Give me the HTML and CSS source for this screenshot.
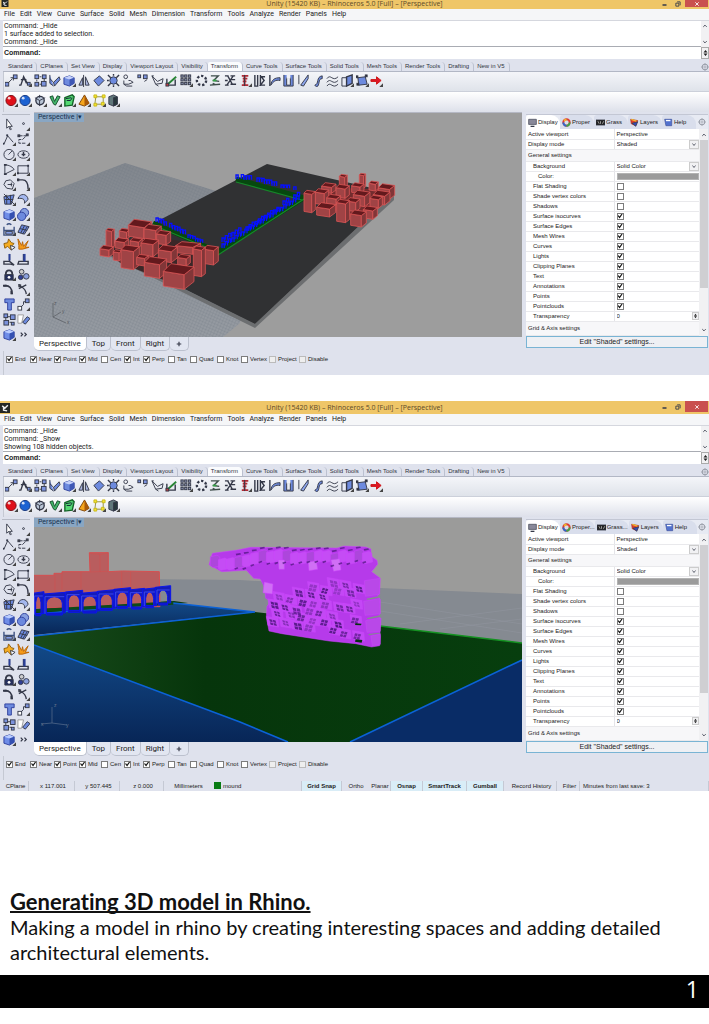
FILE: index.html
```html
<!DOCTYPE html>
<html lang="en">
<head>
<meta charset="utf-8">
<meta name="viewport" content="width=device-width, initial-scale=1">
<title>Generating 3D model in Rhino</title>
<link rel="stylesheet" href="styles.css">
</head>
<body>
<main class="sheet">
  <section class="app app-cut" id="plan" aria-label="Site plan model"></section>
  <section class="app" id="street" aria-label="Street level model"></section>
  <article class="caption">
    <h1>Generating 3D model in Rhino.</h1>
    <p>Making a model in rhino by creating interesting spaces and adding detailed architectural elements.</p>
  </article>
  <footer class="page-foot">1</footer>
</main>
<script src="app.js"></script>
</body>
</html>
```

FILE: styles.css
```css
* { box-sizing: border-box; }
body { margin: 0; background: #fff; color: #222; font-family: "Liberation Sans", Arial, sans-serif; }
button, input, select { font: inherit; color: inherit; margin: 0; padding: 0; border: 0; background: none; border-radius: 0; }
svg { display: block; }
.sheet { display: flex; flex-direction: column; min-height: 100vh; }

.app { background: #dfe2ed; font-size: 6px; line-height: 8px; overflow: hidden; margin-bottom: 26px; flex: none; }
.app-cut .titlebar { height: 9px; line-height: 7px; }
.app-cut .win-buttons { height: 7px; }
.app-cut .logo { height: 7px; margin-top: 0; }

.titlebar { display: grid; grid-template-columns: 1fr auto 1fr; height: 13px; background: #efc668; font: 7px/14px "Open Sans", sans-serif; color: #5c4a28; }
.logo { width: 10px; height: 10px; margin-top: 2px; }
.win-buttons { display: flex; justify-content: flex-end; height: 11px; padding-right: 1px; }
.win-buttons button { width: 14px; display: grid; place-items: center; }
.win-buttons .close { width: 23px; background: #c9504f; }

.menubar { display: flex; gap: 5px; height: 11px; padding: 0 4px; background: #f5f6f8; font: 7px/11px Roboto, sans-serif; }
.menubar button { white-space: nowrap; }

.command { display: grid; grid-template-columns: 1fr 8px; margin-left: 3px; background: #fff; border-top: 1px solid #d5d7de; }
.history { height: 26px; padding: 1px; border-bottom: 1px solid #a9acb3; font: 7px/8px Roboto, sans-serif; }
.history p { margin: 0; }
.prompt { height: 11px; display: flex; gap: 2px; align-items: center; padding-left: 1px; font-weight: bold; font-size: 7px; }
.prompt input { flex: 1; min-width: 0; height: 9px; outline: 0; }
.scroll { display: flex; flex-direction: column; justify-content: space-between; align-items: center; background: #f1f1f3; padding: 2px 0; }
.scroll.small { border: 1px solid #aaa; padding: 1px 0; }

.tool-tabs { display: flex; height: 13px; align-items: flex-end; border-bottom: 1px solid #b2b7c5; margin-left: 3px; padding-left: 2px; }
.tool-tabs button { height: 9px; line-height: 9px; padding: 0 4px 0 3px; white-space: nowrap; border-right: 1px solid #bcc1d0; border-radius: 2px 4px 0 0; color: #30343e; }
.tool-tabs button.active { background: #fafbfd; }
.tool-tabs .gear { margin-left: auto; border: 0; padding: 0; }

.toolbar { height: 20px; margin-left: 3px; padding: 1px 0; background: linear-gradient(#f4f5f9, #dfe3ea); border-left: 1px solid #c5c9d3; border-bottom: 1px solid #ccd0da; }
.toolbar + .toolbar { background: linear-gradient(#fff, #dde0ea); border-bottom: 0; }
.tools { display: flex; justify-content: space-between; align-items: center; width: 380px; }
.tools.short { width: 117px; }
.tool { width: 14px; height: 15px; display: grid; place-items: center; }

.work { display: grid; grid-template-columns: 34px 1fr 187px; }
.palette { margin: 2px 4px 0 2px; padding-top: 2px; border-top: 1px solid #b7bbc6; display: grid; grid-template-columns: 14px 14px; grid-auto-rows: 15px; align-content: start; height: 0; }
.stage { min-width: 0; display: flex; flex-direction: column; }
.viewport { position: relative; border-top: 1px solid #b5b8c4; }
.viewport > svg { width: 100%; height: auto; }
.view-name { position: absolute; left: 0; top: 0; height: 9px; padding: 0 2px 0 4px; background: #89a6c3; font: 7px/9px Roboto, sans-serif; color: #16304e; }
.view-tabs { display: flex; height: 14px; font: 8px/13px Roboto, sans-serif; }
.view-tabs button { padding: 0 5px; border: 1px solid #bcc1ce; border-top: 0; border-left: 0; border-radius: 0 0 5px 5px; background: #e2e6f1; }
.view-tabs button.active { background: #fff; }

.panel { margin: 2px 1px 2px 4px; display: flex; flex-direction: column; border-top: 1px solid #c3c7d4; min-width: 0; }
.panel-tabs { display: flex; height: 14px; padding-right: 1px; background: #e7eaf3; }
.panel-tabs button { display: flex; align-items: center; gap: 1px; flex: 0 0 34px; padding-left: 2px; white-space: nowrap; border-radius: 3px 9px 0 0; background: #d9deec; }
.panel-tabs button:first-child { background: #fff; }
.panel-tabs .gear { flex: 1; background: none; padding: 0; justify-content: center; }
.props { display: grid; grid-template-columns: 1fr 9px; background: #f8f8fa; }
.props table { width: 100%; border-collapse: collapse; table-layout: fixed; background: #fff; }
.props th, .props td { height: 10px; padding: 0 0 0 2px; font-weight: normal; text-align: left; line-height: 8px; border-bottom: 1px solid #e9e9ec; }
.props th { width: 88px; border-right: 1px solid #e4e4e8; }
.props tr.group th { height: 12px; background: #f7f7f9; border-right: 0; }
.props tr:last-child th { height: 14px; }
.props .sub th { padding-left: 7px; }
.props .deep th { padding-left: 12px; }
.field { display: flex; align-items: center; height: 8px; }
.field select, .field input { flex: 1; min-width: 0; height: 8px; appearance: none; }
.field svg { flex: none; border: 1px solid #ccc; background: #f1f1f3; }
.swatch { display: block; width: 82px; height: 7px; background: #9b9b9b; border: 1px solid #b3b3b3; }
.bar { display: flex; flex-direction: column; align-items: center; background: #f1f1f3; padding: 3px 0; gap: 2px; }
.thumb { width: 8px; height: 148px; background: #cfcfd2; margin-bottom: auto; }
.edit { height: 12px; border: 1px solid #79b4d4; background: #eef0f4; font-size: 7px; line-height: 9px; }
input[type=checkbox] { appearance: none; flex: none; width: 7px; height: 7px; border: 1px solid #7c7c7c; background: #fff; display: grid; }
input[type=checkbox]:checked::before { content: ""; background: #111; clip-path: polygon(0 45%, 20% 35%, 40% 60%, 85% 0, 100% 15%, 42% 100%); }
input[type=checkbox]:disabled { border-color: #bbb; background: #eee; }

.osnap { display: grid; grid-template-columns: 24px 24px 25px 22px 23px 19px 25px 22px 27px 24px 28px 30px 40px; height: 24px; padding: 4px 0 0 2px; margin-left: 3px; border-left: 1px solid #c5c9d3; }
.osnap label { display: flex; align-items: center; gap: 2px; height: 8px; white-space: nowrap; }

.status { display: grid; grid-template-columns: 29px 46px 45px 44px 46px 92px 40px 25px 24px 32px 44px 37px 53px 23px 1fr; height: 11px; align-items: end; }
.status span { height: 10px; line-height: 11px; white-space: nowrap; padding-left: 3px; text-align: center; border-right: 1px solid #c5c9d4; overflow: hidden; }
.status .on { background: #d9edf7; font-weight: bold; padding: 0; }
.status .open { border: 0; }
.status .left { text-align: left; }
.status i { display: inline-block; width: 7px; height: 7px; background: #087b13; margin: 0 2px 0 1px; vertical-align: -1px; }

.caption { margin: 71px 10px 10px; font: 20px/25px Lato, sans-serif; color: #111; font-variant-ligatures: none; }
.caption h1 { margin: 0; font-size: 22px; line-height: 27px; font-weight: bold; text-decoration: underline; text-decoration-thickness: 2px; text-decoration-skip-ink: none; }
.caption p { margin: 0; }
.page-foot { margin-top: auto; margin-bottom: 16px; height: 33px; background: #000; color: #fff; text-align: right; padding-right: 10px; font: 23px/28px "Open Sans", sans-serif; }
```

FILE: app.js
```js
const svg = (body, w = 13, h = 13, box = "0 0 14 14") =>
  `<svg width="${w}" height="${h}" viewBox="${box}" fill="none" stroke="#343848" aria-hidden="true">${body}</svg>`;
const CARET = '<path d="M14 10v4h-4z" fill="#444" stroke="none"/>';
const sq = (x, y, s = 4, f = "#7b92dc") => `<rect x="${x}" y="${y}" width="${s}" height="${s}" fill="${f}"/>`;
const BLUE = "#6d8ade", DEEP = "#2d3f9c";
const cube = (f, t, s) => `<path d="M1 4l6-2 5 2v6l-5 3-6-2z" fill="${f}" stroke="${DEEP}"/><path d="M1 4l6 2 5-2-5-2z" fill="${t}" stroke="none"/><path d="M7 6v7l5-3V4z" fill="${s}" stroke="none"/>`;
const ball = (c, d) => `<circle cx="6.500" cy="7" r="5.500" fill="${c}" stroke="${d}"/><circle cx="4.500" cy="4.500" r="1.500" fill="#fff" stroke="none" opacity=".8"/>` + CARET;

const transformTools = {
  Move: sq(0, 9) + sq(9, 1) + '<path d="M4 9l4-4M6 4h3v3"/>',
  Copy: '<path d="M0 12h2L5 3l3 7M5 3l5 9M2 6h6" stroke-width="1.500"/>' + sq(9, 9, 3) + CARET,
  Rotate: sq(1, 1) + sq(9, 1) + sq(1, 9) + sq(8, 8, 5) + '<path d="M6 3h2M3 6v2M6 11h2M11 5v3"/>',
  Rotate3D: `<path d="M2 1v9l4 3M2 5l4 4M6 9l6-6 1 3-6 7z" fill="${BLUE}"/>`,
  Scale: cube(BLUE, "#c3d0fa", "#3f58b5") + CARET,
  Mirror: '<path d="M6 1v13M5 4L1 12h4zM8 3l4 9H8z" fill="#aab6e0"/>',
  Orient: `<path d="M2 7l6-5 5 5-6 6z" fill="${BLUE}"/>`,
  OrientSurface: `<circle cx="7" cy="7" r="4" fill="${BLUE}"/><path d="M1 1l3 3M13 1l-3 3M1 13l3-3M13 13l-3-3M7 0v2M7 12v2M0 7h2" stroke-width="1.500"/>`,
  Project: '<circle cx="4" cy="3" r="2"/><path d="M2 7v4h5l5-2-3-2H7M2 11l3 2h6"/>',
  SetPoints: sq(2, 1, 3) + sq(8, 1, 4) + '<path d="M9 8l3-2"/>',
  Shear: '<path d="M1 2l4 9 7-1 1-5-6 3zM1 2l2 0M5 11l3 2" fill="#e7e9f0"/>',
  Box: '<path d="M2 5v7h9V6" stroke-width="1.500"/><path d="M3 11l9-8" stroke="#278434" stroke-width="2"/>' + sq(1, 10, 3, "#c43d3d"),
  Array: [1, 5, 9].map(y => [1, 5, 9].map(x => sq(x, y, 2.5, "#8d95b4")).join("")).join("") + CARET,
  ArrayPolar: '<circle cx="7" cy="7" r="5" stroke-width="2.500" stroke-dasharray="2.500 2"/>',
  ArrayCurve: '<path d="M2 2h8L5 7l6 1M1 12l11-1M4 10l4 2" stroke="#3d4c49" stroke-width="1.500"/><path d="M4 7h4" stroke="#35a346" stroke-width="2"/>',
  ArraySurface: '<path d="M1 2h4M7 2h5M1 7h3M6 6h6M1 12h4M7 11h6M4 2l5 9M10 2L3 12" stroke-width="1.500"/>',
  Twist: '<path d="M3 2h7M4 5h5M4 8h4M3 12h7M6 1v12" stroke="#b02b35" stroke-width="2"/><path d="M6 1v12"/>' + CARET,
  Taper: '<path d="M2 1v12h3V1M8 1v12M13 3H9l3 4-4 5h5" stroke-width="1.500"/>',
  Bend: '<path d="M2 1v12" stroke-width="1.500"/><path d="M3 12c1-6 4-8 10-8v3c-5-1-7 1-10 5z" fill="#6d8ade"/>',
  Flow: `<path d="M2 1v12h10V1M5 12V4h4v8z" fill="${BLUE}"/><path d="M5 1h4v4H5z" fill="#f1f2f6" stroke="none"/>`,
  FlowSurface: '<path d="M2 1v10M4 12L12 1v4L7 13z" fill="#8da6ee"/>',
  Stretch: `<path d="M3 12c5-1 1-9 8-10v3c-5 0-2 7-6 9z" fill="${BLUE}"/>`,
  Smooth: '<path d="M1 5c4-6 6 4 12-2M1 9c4-6 6 4 12-2M1 13c4-6 6 4 12-2"/>',
  Maelstrom: `<path d="M1 4h5v9H1z" fill="#e8ebf5"/><path d="M6 3l6-2v9l-6 3z" fill="${BLUE}" stroke-width="1.500"/>` + CARET,
  Cage: `<path d="M2 4l8-1 2 8-9 1z" fill="${BLUE}"/>` + sq(0, 2, 2, "#222") + sq(10, 1, 2, "#222") + sq(1, 10, 2, "#222") + CARET,
  More: '<path d="M1 6h6V3l5 4-5 4V8H1z" fill="#e01525" stroke="#c11"/>' + CARET,
};
const displayTools = {
  Red: ball("#df1019", "#7b0b11"),
  Blue: ball("#1c62d2", "#12357d"),
  Ghosted: '<circle cx="6.500" cy="7" r="4.500" fill="#b9c5d6" stroke-width="1.500"/><path d="M1 4l5 3 6-3M6 7v6M6 1v3"/>' + CARET,
  Extrude: '<path d="M1 3l4 8 2 1 5-9-3-1-3 6-2-6z" fill="#44b56b" stroke="#174f2c"/>' + CARET,
  Mesh: '<path d="M2 4l8-3 2 2-2 9-8 1z" fill="#55d873" stroke="#126327" stroke-width="1.500"/><path d="M4 7h4l2-3M3 5l6-1" stroke="#123"/>' + CARET,
  Cone: '<path d="M1 11L7 1l5 9-5 3z" fill="#f5a51c" stroke="#7a4207"/><path d="M7 1v12l5-3z" fill="#a95909" stroke="none"/>' + CARET,
  Points: '<path d="M3 3h8v8H2z" stroke="#8f8e3a"/>' + [[1, 1], [10, 1], [1, 10], [9, 9]].map(([x, y]) => `<path d="M${x} ${y}h3v3h-3z" fill="#f5e52c" stroke="#c9b91d"/>`).join("") + CARET,
  Block: '<path d="M2 3l5-2 4 2v8l-4 2-5-2z" fill="#60777a"/><path d="M7 4l4-1v8l-4 2z" fill="#27393c"/>' + CARET,
};
const sideTools = {
  Select: '<path d="M4 1v10l2-2 2 4 1-1-2-3h3z" fill="#fff"/>',
  Point: '<circle cx="7" cy="6" r="1"/>' + CARET,
  Polyline: '<path d="M1 12L5 3l6 7"/>' + sq(0, 11, 1) + sq(4, 2, 1) + CARET,
  Curve: '<path d="M2 3h8l-4 4H2v4h7" stroke-dasharray="4 1"/>' + sq(1, 2, 2, "#555") + sq(10, 1, 2, "#555") + CARET,
  Circle: '<circle cx="6.500" cy="7" r="5.500"/><path d="M6 7l4-4"/>' + CARET,
  Ellipse: '<ellipse cx="7" cy="7" rx="6" ry="4"/><path d="M7 4v5M5 7h4" stroke-width="1.500"/>' + CARET,
  Arc: '<path d="M2 2c5 0 9 3 10 5L2 12z"/><path d="M1 12h3M1 2h3" stroke-width="2"/>' + CARET,
  Rectangle: '<path d="M1 3h11v8H1z"/><path d="M0 11h2M11 3h2" stroke-width="2"/>' + CARET,
  Polygon: '<path d="M3 3l5-1 4 4-2 6-6-1-3-4zM5 7h5M9 5v4"/>' + CARET,
  Fillet: '<path d="M1 2h5c5 0 6 4 6 10" stroke-width="1.500"/>' + sq(0, 1, 2, "#333") + CARET,
  Surface: `<path d="M1 4l11-2-3 10H2z" fill="${BLUE}"/><path d="M4 2v10M8 2v10M2 7h9M1 1l11 11"/>` + CARET,
  Sweep: '<path d="M1 6c2-6 10-6 11 1l-4 4c1-4-2-6-7-5z" fill="#a4b8ef"/>' + CARET,
  Solid: cube("#6e8ce7", "#b9ccff", "#3450b1") + CARET,
  Boolean: `<circle cx="8" cy="5" r="4.500" fill="#88a0e0" stroke="${DEEP}"/><circle cx="5" cy="9" r="4.500" fill="${BLUE}" stroke="${DEEP}"/>` + CARET,
  Join: '<path d="M1 4v9h11V4M1 8h11M4 2c2-2 4-1 5 0" stroke="#3e5280" stroke-width="1.500"/><path d="M3 9h7v3H3z" fill="#86a0e8"/>' + CARET,
  MeshTools: `<path d="M5 2l8 2-5 8-7-2z" fill="${BLUE}"/><path d="M3 6l8 2M8 3l-4 8M11 4l-5 8"/>` + CARET,
  Explode: '<path d="M1 6l4-1 1-4 3 4 3 1-3 3v4L5 9 2 11z" fill="#f6ad22" stroke="#8c5b08"/><path d="M8 8l5 2-4 3z" fill="#fff"/>',
  Trim: '<path d="M1 1l4 7 1-4 1 5 5-6-3 7 4 0-7 2H2V8z" fill="#f59a19" stroke="#b7640b"/>',
  Split: '<path d="M7 1v8H1v3h7l4 1M7 9l5 4" stroke-width="1.500"/><path d="M7 1v7" stroke="#2c419a" stroke-width="2"/>',
  Cut: '<path d="M2 9h10v3H1zM7 8V1" stroke-width="1.500"/><path d="M8 1v8" stroke="#2c419a" stroke-width="2.500"/>',
  Lock: '<path d="M2 7h9v6H2z" fill="#26305e"/><circle cx="6.500" cy="10" r="1.500" fill="#fff" stroke="none"/><path d="M3 7c0-6 7-6 7 0" stroke-width="2"/>' + CARET,
  Group: '<circle cx="5" cy="4" r="2.500" fill="#ccc"/><circle cx="4" cy="10" r="2.500" fill="#303e93"/><circle cx="10" cy="9" r="3" fill="#8ca1de"/>',
  Blend: '<path d="M1 3c6-1 9 3 9 9" stroke-width="1.700"/><path d="M0 3h4M9 8v4" stroke-width="2"/>',
  Offset: '<path d="M2 1c0 4 7 2 8 11M2 6l8-4" stroke-width="1.400"/>' + sq(2, 2, 2, "#555") + CARET,
  Text: `<path d="M2 1h10v4H9v8H5V5H2z" fill="${BLUE}" stroke="${DEEP}"/>`,
  Align: sq(1, 9, 4, "#fff") + sq(9, 1) + '<path d="M5 9l2-2V4h2"/>' + CARET,
  Blocks: sq(1, 1) + sq(8, 2, 5) + sq(1, 8, 5) + sq(9, 10, 3) + '<path d="M5 4h3M3 5v3M7 10h2"/>',
  Layers: '<path d="M1 2h6l-2 9H1z" fill="#fff" stroke="#999"/><path d="M6 10l5-6 3 2-5 6z" fill="#6d8ade"/>',
  Render: cube("#6e8ce7", "#b9ccff", "#3450b1") + CARET,
  Expand: '<path d="M4 5l2 2-2 2M8 5l2 2-2 2" stroke-width="1.300"/>',
};
const GEAR = svg('<circle cx="7" cy="7" r="5" stroke="#8b909b" stroke-width="1.500"/><circle cx="7" cy="7" r="2" stroke="#8b909b"/><path d="M7 0v3M7 11v3M0 7h3M11 7h3" stroke="#8b909b"/>', 8, 8);
const UP = svg('<path d="M3 9l4-4 4 4" stroke-width="2"/>', 6, 6);
const DOWN = svg('<path d="M3 5l4 4 4-4" stroke-width="2"/>', 6, 6);
const SPIN = svg('<path d="M3 6l4-5 4 5zM3 8l4 5 4-5z" fill="#222" stroke="none"/>', 7, 8);

const tools = set => Object.entries(set).map(([name, art]) => `<button class="tool" aria-label="${name}">${svg(art)}</button>`).join("");

/* One shaded block: a dark lid over two lit sides, inside the rectangle x1,y1 - x2,y2. */
function block([x1, y1, x2, y2]) {
  const w = x2 - x1, h = y2 - y1, t = Math.min(w * .36, h * .45), a = x1 + w * .25, b = x1 + w * .68, k = t * .3;
  return `<path fill="#a04345" d="M${x1} ${y1 + t - k}L${b} ${y1 + t}V${y2}L${x1} ${y2 - k}z"/>` +
    `<path fill="#813638" d="M${b} ${y1 + t}L${x2} ${y1 + k}V${y2 - t + k}L${b} ${y2}z"/>` +
    `<path fill="#63191d" d="M${x1} ${y1 + t - k}L${a} ${y1}L${x2} ${y1 + k}L${b} ${y1 + t}z"/>`;
}
const westBlocks = [[318,352,343,412],[358,352,390,385],[385,325,455,383],[300,403,340,438],[432,340,484,388],[470,358,512,402],[345,380,386,415],[390,380,427,410],[340,416,366,450],[423,382,476,437],[363,402,418,476],[410,430,445,465],[527,392,602,430],[475,402,532,455],[533,430,571,465],[610,403,655,462],[580,405,616,497],[433,437,500,502],[490,458,582,535]];
const eastBlocks = [[328,190,352,238],[388,187,407,232],[275,215,318,247],[417,210,445,240],[445,218,494,265],[365,215,402,248],[318,220,358,262],[255,233,296,282],[290,250,332,282],[370,238,420,287],[430,238,480,282],[420,253,457,292],[222,238,256,305],[350,260,390,302],[400,285,442,325],[260,275,317,318],[320,265,359,335],[362,297,409,348]];

/* A run of small arched bays; bays listed in gaps are left open. */
function arcade(x1, y1, x2, y2, n, h, gaps = []) {
  let out = "";
  for (let i = 0; i < n; i++) {
    if (gaps.includes(i)) continue;
    const x = x1 + (x2 - x1) * i / n, y = y1 + (y2 - y1) * i / n - (i % 3) * .5;
    out += `M${x.toFixed(1)} ${(y + h).toFixed(1)}v-${h}h2.2v${h}`;
  }
  return `<path d="${out}" fill="none" stroke="#0610ff" stroke-width="1.300"/>`;
}
const planScene = `<svg viewBox="34 112 488 224" role="img" aria-label="Perspective view of the site">
<defs><pattern id="mesh" width="3" height="3" patternUnits="userSpaceOnUse" patternTransform="rotate(24)"><path d="M0 0H3M0 0V3" stroke="#6f7782" stroke-width=".4"/></pattern>
<linearGradient id="floor" x2="0" y2="1"><stop stop-color="#82878e"/><stop offset="1" stop-color="#969ba2"/></linearGradient></defs>
<path fill="#9d9d9d" d="M34 112h488v225H34z"/>
<path fill="url(#floor)" d="M34 197l91-35 130 40-15 120-18 15H34z"/><path fill="url(#mesh)" d="M34 197l91-35 130 40-15 120-18 15H34z"/>
<path fill="#6c6e70" d="M101 251l154 76 139-128v-7L255 323 101 247z"/>
<path fill="#303133" d="M104 248l163-85 127 29-139 131z"/>
<path d="M153 222l65 29 86-54-68-19" fill="none" stroke="#06480f" stroke-width="5"/><path d="M218 254l86-56M153 224l62 26M236 181l66 18" stroke="#16872a" stroke-width="1.200"/>
${arcade(156, 217, 186, 231, 11, 4, [4])}${arcade(188, 234, 203, 241, 6, 3)}${arcade(236, 174, 252, 176, 6, 4, [1])}${arcade(257, 177, 277, 182, 8, 4)}${arcade(281, 184, 297, 187, 5, 3, [3])}${arcade(222, 243, 300, 194, 24, 4, [])}${arcade(222, 237, 242, 226, 6, 4)}${arcade(246, 226, 280, 205, 11, 4)}${arcade(283, 200, 301, 190, 5, 4, [2])}
<g stroke="#d95656" stroke-width="2.400" stroke-linejoin="round"><g transform="translate(0 110) scale(.3333)"><path d="M320 420L450 375 600 400 650 430 545 528 360 455z" fill="#3b2728" stroke="none"/>${westBlocks.map(block).join("")}</g>
<g transform="translate(230 110) scale(.3333)"><path d="M240 270L290 230 480 235 395 330z" fill="#732c2e" stroke="none"/>${eastBlocks.map(block).join("")}</g></g>
<path d="M53 302v14l13 6M53 316l8-5" fill="none" stroke="#5e6268" stroke-width=".8"/><g font-size="5" fill="#55595f"><text x="54" y="304">z</text><text x="62" y="312">y</text><text x="67" y="323">x</text></g></svg>`;

/* Front wall of the arcade: solid spandrels with a rounded opening in each bay. */
function arches() {
  const bays = [[98, 232, 34, 66], [130, 234, 66, 62], [196, 228, 52, 60], [240, 232, 58, 58], [292, 226, 54, 56], [342, 220, 50, 56], [386, 222, 48, 56], [428, 220, 42, 54], [466, 214, 46, 52]];
  return bays.map(([x, y, w, h]) => `<path fill-rule="evenodd" d="M${x} ${y}l${w} -5v${h}h-${w}zM${x + 9} ${y + h + 1}V${y + 28}q2-18 ${w / 2 - 9}-20q${w / 2 - 11} 2 ${w / 2 - 9} 20v${h - 27}z"/><path d="M${x + 5} ${y + h - 4}V${y + 8}h${w - 8}" stroke="#3a46f0" fill="none"/>`).join("");
}
/* Facade openings follow the tilt of the wall; the seed keeps the pattern stable. */
function facade() {
  let seed = 7, panes = "", cells = "";
  const rnd = () => (seed = (seed * 73 + 41) % 1009) / 1009;
  for (let r = 0; r < 8; r++) for (let c = 0; c < 8; c++) {
    const x = 130 + c * 36 + (r % 2) * 16 + rnd() * 10, y = 160 + r * 24 + c * 6 + rnd() * 8;
    if (x > 400 || y > 322 + (x - 120) * .14 || (r < 3 && c < 4 - r) || rnd() < .12) continue;
    cells += `<path d="M${x - 8} ${y - 8}l34 6 2 26-32-5z"/>`;
    const s = 7 + rnd() * 3, k = rnd() < .4 ? -3 : 2;
    const pane = (dx, dy) => `M${x + dx} ${y + dy}l${s} 2 ${k} ${s - 1}-${s}-2z`;
    panes += `<path d="${pane(0, 0)}${pane(s + 2, 2)}${pane(k, s + 1)}${pane(k + s + 2, s + 3)}" opacity="${(.35 + rnd() * .6).toFixed(2)}"/>`;
  }
  let top = "";
  for (let i = 0; i < 20; i++) {
    const x = -44 + i * 24, y = 122 - Math.min(i, 6) * 3 + rnd() * 14;
    top += `<path d="M${x} ${y}l20-5 8 5 3 27-23 5-8-5z" fill="${i % 3 ? "#c54cf5" : "#ad46dc"}"/>`;
    if (i > 2) panes += `<path d="M${x + 4} ${y - 12}l14-2 2 4-14 3zM${x} ${y + 26 + rnd() * 10}l10-3 2 4-10 4z" opacity=".7"/>`;
  }
  return `<g transform="translate(225 515) scale(.3333)" stroke="#cc45fc" stroke-width="1.500">
<path fill="#b63aea" d="M-48 146l10-34 75-10 40-8 260 2 20-6 65 3 16 6 0 22 18 12 2 12-18 22 24 18 0 48-6 6 8 12-1 40-3 10 4 14-1 30 1 18-2 26-24 4-48-10-80-8-142-22-38-8-8-42 2-32 12-16-16-8-4-34-12-24-20-2-22-24-74 4z"/>
${top}<g fill="#c348f5">${cells}</g>
<g fill="#b948e8"><path d="M418 194l48-7-3 48-42 6zM416 256l48-8 2 45-46 5zM422 314l46-8-2 40-40 3zM438 360l28-5v30l-24 4z"/><path d="M160 132l18 0 0 28-16 0zM250 138l24-4 4 26-26 4zM318 132l26-4 4 34-22 4zM118 198l26 6-2 30-28-4z" fill="#d06ff5"/></g>
<g fill="#49147a" stroke="none">${panes}<path d="M392 322l18 1-2 5-18-1zM392 370l20 2-2 8-20-3z" fill="#043310"/><path d="M464 240l4 4-40 8-4-4zM464 298l4 4-40 8-2-4zM464 350l4 2-36 6-2-4z" fill="#858a91"/></g></g>`;
}
const streetScene = `<svg viewBox="34 517 488 224" role="img" aria-label="Perspective view at street level">
<defs><linearGradient id="sea" x2="0" y2="1"><stop stop-color="#124987"/><stop offset="1" stop-color="#082657"/></linearGradient><linearGradient id="lawn"><stop stop-color="#194b1b"/><stop offset=".35" stop-color="#06350b"/><stop offset="1" stop-color="#073e0e"/></linearGradient></defs>
<path fill="#9b9b9a" d="M34 517h488v224H34z"/><path fill="#858a91" d="M34 577l206 2 140 8 142 6v60L34 635z"/>
<path d="M380 601l142 22M380 610l142 22M400 623l122-16M440 628l82-10" stroke="#9297a0" stroke-width=".5"/>
<path fill="#0a3c10" d="M34 608l140-8 14 2-154 12z"/><path fill="url(#sea)" d="M34 613l139-11 82 9-221 23z"/>
<path fill="url(#lawn)" d="M34 635l221-24 125 14 142 17v99H34z"/>
<path d="M380 625l142 17" stroke="#159222" stroke-width="1.500"/>
<path fill="url(#sea)" d="M34 644l206 77 48 20H34z"/><path fill="#092c66" d="M522 659l-172 82h172z"/>
<g fill="none" stroke="#0b62d7" stroke-width="1.600"><path d="M34 613l139-11 82 9-221 24M34 644l206 77 48 20M522 659l-172 82"/></g>
<g transform="translate(0 515) scale(.3333)"><path fill="#b95d5e" stroke="#d64f50" stroke-width="3" d="M100 178h62v-6h24v-5h84l-2-57h57v57l42-2 111 2 2 105-378 4z"/>
<path d="M165 178v50M186 170v50M243 168v50M270 168l55-2M270 112l30 4 25-6M300 116v52M365 168v50M392 168v46" stroke="#ce5152" stroke-width="2" fill="none"/>
<path fill="#0d4a18" d="M100 280l420-24v10l-420 24z"/>
<g fill="#141cb8" stroke="#0b14ee" stroke-width="3">${arches()}</g></g>
${facade()}
<path d="M52 706v16l15 2M52 722l-11 1" fill="none" stroke="#506789" stroke-width=".8"/><g font-size="5" fill="#68778c"><text x="54" y="706">z</text><text x="41" y="725">x</text><text x="66" y="726">y</text></g></svg>`;

const properties = ["Flat Shading", "Shade vertex colors", "Shadows", "Surface isocurves", "Surface Edges", "Mesh Wires", "Curves", "Lights", "Clipping Planes", "Text", "Annotations", "Points", "Pointclouds"];
const panelIcons = [
  '<path d="M1 2h12v8H1z" fill="#889"/><path d="M4 13h6" stroke-width="2"/>',
  '<circle cx="7" cy="7" r="5" stroke="#dd3d36" stroke-width="3"/><path d="M2 7a5 5 0 0 0 5 5" stroke="#2c69ce" stroke-width="3"/><path d="M7 12a5 5 0 0 0 5-5" stroke="#3ba74a" stroke-width="3"/><path d="M3 4l4-2" stroke="#efb82c" stroke-width="3"/>',
  '<path d="M0 3h14v8H0z" fill="#222"/><path d="M3 5l2 4M7 5v4M12 5l-2 4" stroke="#ddd"/>',
  '<path d="M1 2l11 2-3 8-7-3z" fill="#e2402c" stroke="#9f261b"/><path d="M3 8l9-2-3 7z" fill="#324db5"/><path d="M2 2l8 3" stroke="#f0bb31" stroke-width="2"/>',
  '<path d="M1 2h11v10H3z" fill="#5272ce" stroke="#3b4f9a"/><path d="M3 4h7" stroke="#fff" stroke-width="2"/>'];

function render(id, o) {
  const select = (key, value) => `<div class="field"><select id="${id}-${key}"><option>${value}</option></select>${svg('<path d="M4 5l3 4 3-4" stroke-width="1.500"/>', 10, 9)}</div>`;
  const row = (cls, key, label, cell) => `<tr class="${cls}"><th scope="row"><label for="${id}-${key}">${label}</label></th><td>${cell}</td></tr>`;
  document.getElementById(id).innerHTML = `
<header class="titlebar">${svg('<path d="M0 0h14v14H0z" fill="#242724" stroke="none"/><path d="M3 4l4 3 4-4M5 5v5l5 1" stroke="#eee" stroke-width="2"/>', 9, 9).replace("<svg", '<svg class="logo"')}
<span>Unity (15420 KB) – Rhinoceros 5.0 [Full] – [Perspective]</span>
<div class="win-buttons"><button aria-label="Minimize">${svg('<path d="M3 10h8" stroke-width="3"/>', 7, 7)}</button><button aria-label="Restore">${svg('<path d="M2 5h7v7H2zM5 2h7v8" stroke-width="2"/>', 6, 6)}</button><button class="close" aria-label="Close">${svg('<path d="M3 3l8 8M11 3l-8 8" stroke="#fff" stroke-width="2"/>', 6, 6)}</button></div></header>
<nav class="menubar">${"File,Edit,View,Curve,Surface,Solid,Mesh,Dimension,Transform,Tools,Analyze,Render,Panels,Help".split(",").map(t => `<button>${t}</button>`).join("")}</nav>
<div class="command"><div class="history">${o.history.map(t => `<p>${t}</p>`).join("")}</div><div class="scroll">${UP}${DOWN}</div>
<div class="prompt"><label for="${id}-cmd">Command:</label><input id="${id}-cmd"></div><div class="scroll small">${SPIN}</div></div>
<nav class="tool-tabs">${"Standard,CPlanes,Set View,Display,Viewport Layout,Visibility,Transform,Curve Tools,Surface Tools,Solid Tools,Mesh Tools,Render Tools,Drafting,New in V5".split(",").map(t => `<button${t === "Transform" ? ' class="active"' : ""}>${t}</button>`).join("")}<button class="gear" aria-label="Options">${GEAR}</button></nav>
<div class="toolbar"><div class="tools">${tools(transformTools)}</div></div>
<div class="toolbar"><div class="tools short">${tools(displayTools)}</div></div>
<div class="work"><aside class="palette">${tools(sideTools)}</aside>
<div class="stage"><div class="viewport">${o.scene}<button class="view-name">Perspective |▾</button></div>
<nav class="view-tabs"><button class="active">Perspective</button><button>Top</button><button>Front</button><button>Right</button><button aria-label="Add view">${svg('<path d="M7 3v8M3 7h8" stroke-width="2"/>', 8, 8)}</button></nav></div>
<aside class="panel"><nav class="panel-tabs">${o.tabs.map((t, i) => `<button>${svg(panelIcons[i], 9, 9)}${t}</button>`).join("")}<button class="gear" aria-label="Panel options">${GEAR}</button></nav>
<div class="props"><table><tbody>
<tr><th scope="row">Active viewport</th><td>Perspective</td></tr>${row("", "mode", "Display mode", select("mode", "Shaded"))}
<tr class="group"><th colspan="2">General settings</th></tr>${row("sub", "bg", "Background", select("bg", "Solid Color"))}${row("deep", "color", "Color:", `<button class="swatch" id="${id}-color"></button>`)}
${properties.map((p, i) => row("sub", "p" + i, p, `<input type="checkbox" id="${id}-p${i}"${i > 2 ? " checked" : ""}>`)).join("")}
${row("sub", "alpha", "Transparency", `<div class="field"><input id="${id}-alpha" value="0">${SPIN}</div>`)}
<tr class="group"><th colspan="2">Grid &amp; Axis settings</th></tr></tbody></table><div class="bar">${UP}<div class="thumb"></div>${DOWN}</div></div>
<button class="edit">Edit "Shaded" settings...</button></aside></div>
<div class="osnap">${"End,Near,Point,Mid,Cen,Int,Perp,Tan,Quad,Knot,Vertex,Project,Disable".split(",").map((t, i) => `<label><input type="checkbox"${[0, 1, 2, 3, 5, 6].includes(i) ? " checked" : ""}${i > 10 ? " disabled" : ""}>${t}</label>`).join("")}</div>
${o.status ? `<footer class="status"><span>CPlane</span><span>x 117.001</span><span>y 507.445</span><span>z 0.000</span><span class="open">Millimeters</span><span class="left"><i></i>mound</span><span class="on">Grid Snap</span><span class="open">Ortho</span><span>Planar</span><span class="on">Osnap</span><span class="on">SmartTrack</span><span class="on">Gumball</span><span>Record History</span><span>Filter</span><span class="left">Minutes from last save: 3</span></footer>` : ""}`;
}
render("plan", { history: ["Command: _Hide", "1 surface added to selection.", "Command: _Hide"], tabs: ["Display", "Proper", "Grass", "Layers", "Help"], scene: planScene });
render("street", { history: ["Command: _Hide", "Command: _Show", "Showing 108 hidden objects."], tabs: ["Display", "Proper...", "Grass...", "Layers", "Help"], scene: streetScene, status: true });
```
